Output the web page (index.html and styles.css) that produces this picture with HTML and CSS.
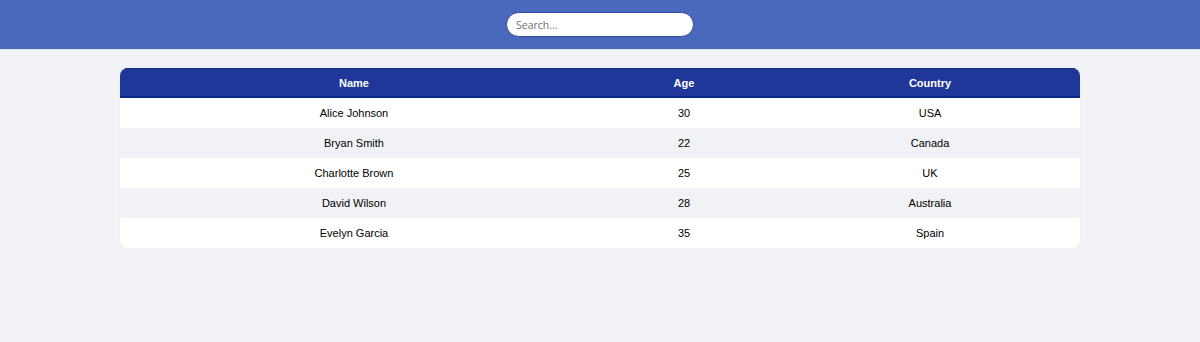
FILE: index.html
```html
<!DOCTYPE html>
<html lang="en">
<head>
<meta charset="utf-8">
<title>People</title>
<link rel="stylesheet" href="styles.css">
</head>
<body>
<header class="topbar">
  <input class="search" type="text" placeholder="Search...">
</header>
<main class="content">
  <table class="people">
    <thead>
      <tr><th class="col-name">Name</th><th class="col-age">Age</th><th class="col-country">Country</th></tr>
    </thead>
    <tbody>
      <tr><td>Alice Johnson</td><td>30</td><td>USA</td></tr>
      <tr><td>Bryan Smith</td><td>22</td><td>Canada</td></tr>
      <tr><td>Charlotte Brown</td><td>25</td><td>UK</td></tr>
      <tr><td>David Wilson</td><td>28</td><td>Australia</td></tr>
      <tr><td>Evelyn Garcia</td><td>35</td><td>Spain</td></tr>
    </tbody>
  </table>
</main>
</body>
</html>
```
FILE: styles.css
```css
* { box-sizing: border-box; }
html, body { margin: 0; padding: 0; }
body {
  background: #f1f2f6;
  font-family: "Liberation Sans", Arial, sans-serif;
  font-size: 11px;
  color: #000;
  height: 342px;
}
.topbar {
  height: 50px;
  background: #4a69bd;
  border-bottom: 1px solid #dfe3ee;
  display: flex;
  justify-content: center;
  align-items: flex-start;
  padding-top: 12px;
}
.search {
  width: 188px;
  height: 25px;
  border-radius: 13px;
  border: 1px solid #2f4a9a;
  background: #fff;
  padding: 1px 9px 0;
  font-family: "Open Sans", sans-serif;
  font-size: 10.5px;
  color: #333;
  outline: none;
}
.search::placeholder { color: #6f6f6f; }
.content {
  padding: 18px 120px 0;
}
.people {
  width: 960px;
  border-collapse: separate;
  border-spacing: 0;
  border-radius: 8px;
  overflow: hidden;
  background: #fff;
  box-shadow: 0 0 1px rgba(0,0,0,0.08);
}
.people th {
  background: #1e3799;
  color: #fff;
  font-weight: bold;
  height: 30px;
  padding: 0;
  text-align: center;
  border-top: 1px solid #17308c;
  border-bottom: 2px solid #0c2a85;
}
.col-name { width: 468px; }
.col-age { width: 192px; }
.col-country { width: 300px; }
.people td {
  height: 30px;
  padding: 0;
  text-align: center;
}
.people tbody tr:nth-child(even) td { background: #f1f2f6; }
.people tbody tr:nth-child(odd) td { background: #fff; }
```
